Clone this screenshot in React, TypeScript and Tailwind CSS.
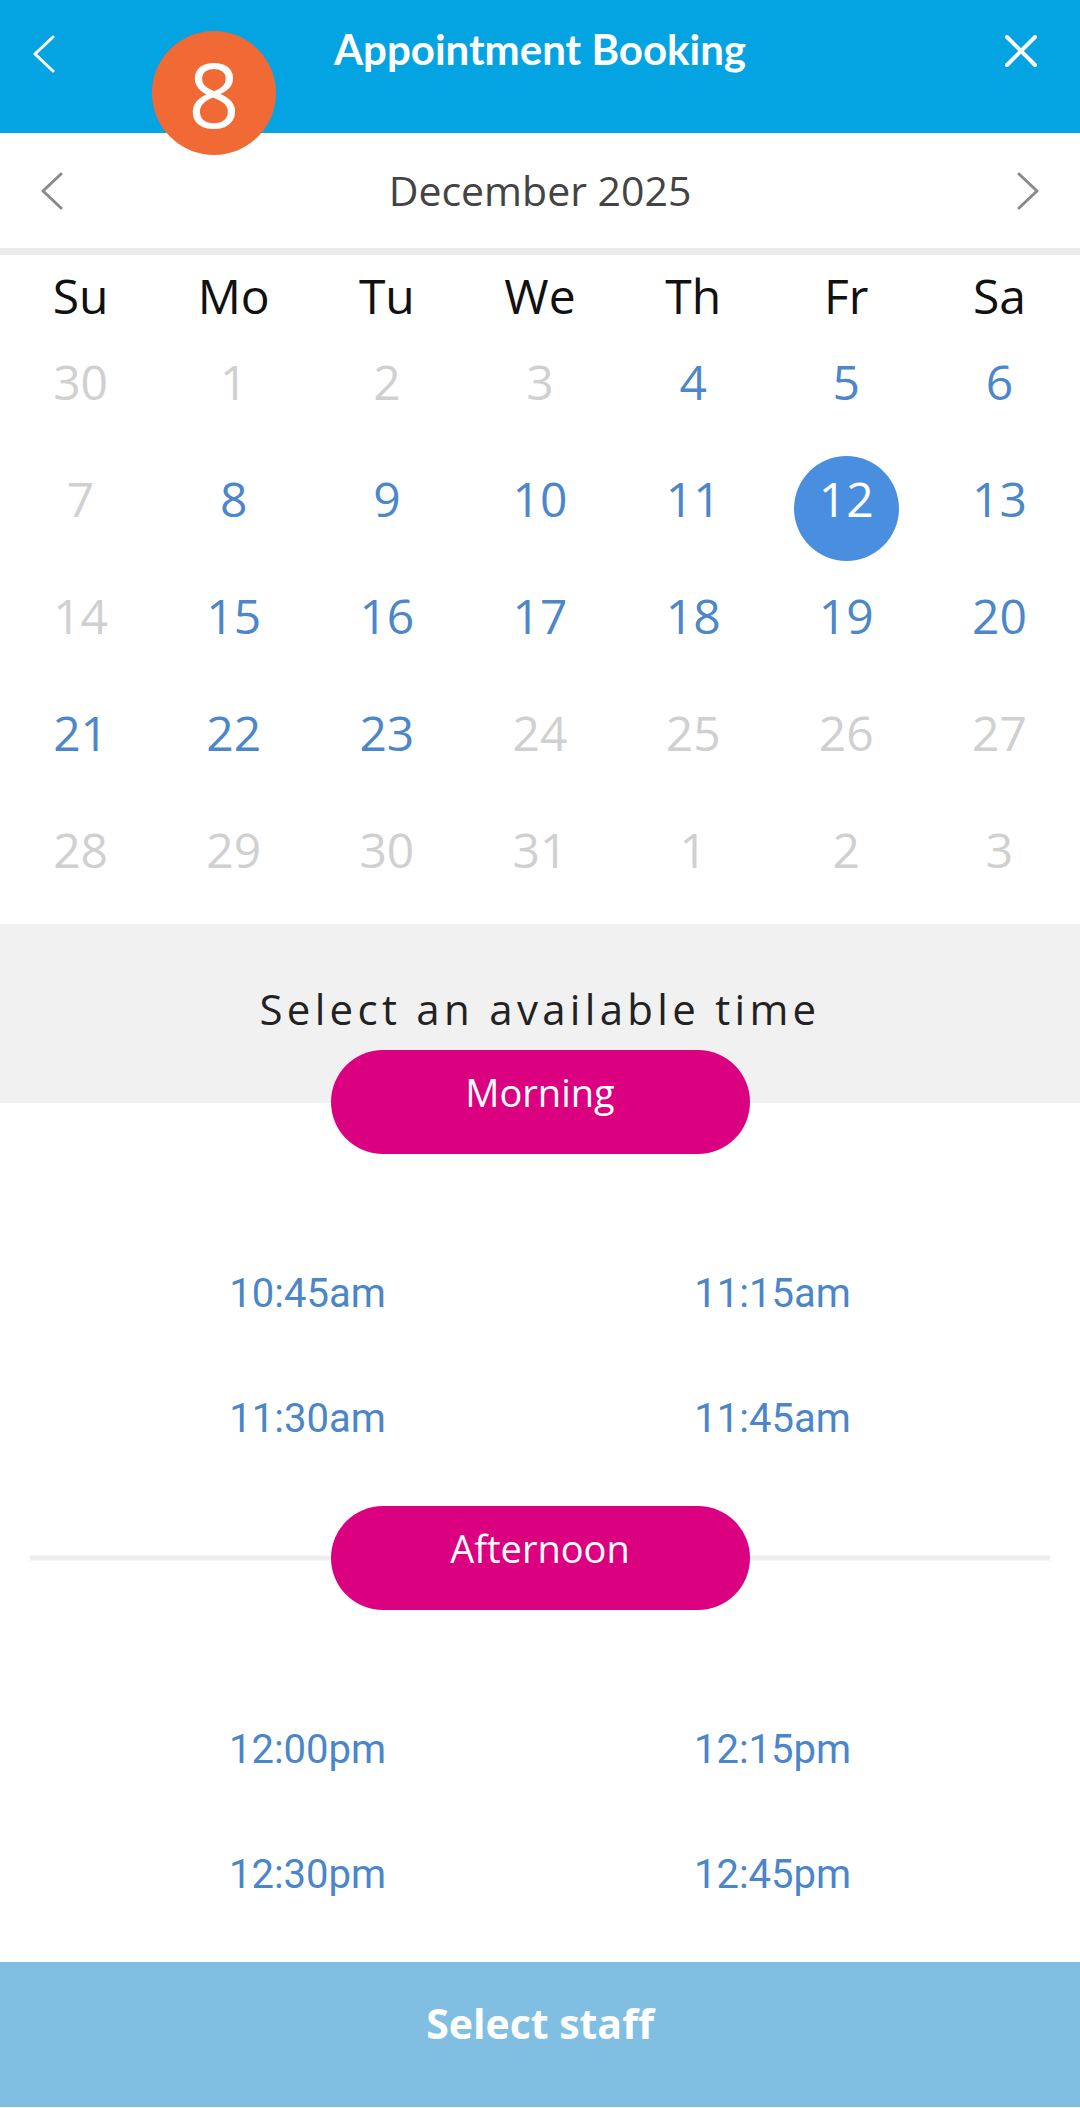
import React from "react";

type Day = { n: number; on?: boolean; sel?: boolean };

const weekdays = ["Su", "Mo", "Tu", "We", "Th", "Fr", "Sa"];

const weeks: Day[][] = [
  [{ n: 30 }, { n: 1 }, { n: 2 }, { n: 3 }, { n: 4, on: true }, { n: 5, on: true }, { n: 6, on: true }],
  [{ n: 7 }, { n: 8, on: true }, { n: 9, on: true }, { n: 10, on: true }, { n: 11, on: true }, { n: 12, sel: true }, { n: 13, on: true }],
  [{ n: 14 }, { n: 15, on: true }, { n: 16, on: true }, { n: 17, on: true }, { n: 18, on: true }, { n: 19, on: true }, { n: 20, on: true }],
  [{ n: 21, on: true }, { n: 22, on: true }, { n: 23, on: true }, { n: 24 }, { n: 25 }, { n: 26 }, { n: 27 }],
  [{ n: 28 }, { n: 29 }, { n: 30 }, { n: 31 }, { n: 1 }, { n: 2 }, { n: 3 }],
];

function Pill({ label }: { label: string }) {
  return (
    <div className="relative z-10 flex h-[104px] w-[419px] items-center justify-center rounded-full bg-[#db0080] pb-[20px] text-[38px] leading-none text-white">
      {label}
    </div>
  );
}

function Times({ items }: { items: string[] }) {
  return (
    <div className="mt-[77px] mb-[25px] grid grid-cols-2 px-[75px] font-['Roboto',sans-serif]">
      {items.map((t) => (
        <div key={t} className="flex h-[125px] items-center justify-center text-[40px] leading-none text-[#4a86c8]">
          {t}
        </div>
      ))}
    </div>
  );
}

export default function App() {
  return (
    <div className="flex min-h-[2108px] w-[1080px] flex-col bg-white font-['Open_Sans',sans-serif]">
      {/* Header */}
      <div className="relative grid h-[133px] grid-cols-[1fr_auto_1fr] items-start bg-[#04a4e2] text-white">
        <div className="pt-[35px] pl-[33px]">
          <svg width="24" height="38" viewBox="0 0 24 38" fill="none">
            <polyline points="20,2 2,19 20,36" stroke="white" strokeWidth="3" strokeLinecap="round" strokeLinejoin="round" />
          </svg>
        </div>
        <div className="pt-[28px] font-['Lato',sans-serif] text-[42px] font-bold leading-none">
          Appointment Booking
        </div>
        <div className="flex justify-end pt-[34px] pr-[42px]">
          <svg width="34" height="34" viewBox="0 0 34 34" fill="none">
            <path d="M3 3 L31 31 M31 3 L3 31" stroke="white" strokeWidth="4" strokeLinecap="round" />
          </svg>
        </div>
        {/* step badge */}
        <div className="absolute left-[152px] top-[31px] flex h-[124px] w-[124px] items-center justify-center rounded-full bg-[#f16a35] text-[90px] leading-none text-white">
          8
        </div>
      </div>

      {/* Month switcher */}
      <div className="flex h-[115px] items-center justify-between px-[40px]">
        <svg width="24" height="38" viewBox="0 0 24 38" fill="none">
          <polyline points="21,2 3,19 21,36" stroke="#8a8a8a" strokeWidth="3" strokeLinecap="round" strokeLinejoin="round" />
        </svg>
        <span className="text-[41px] leading-none text-[#444]">December 2025</span>
        <svg width="24" height="38" viewBox="0 0 24 38" fill="none">
          <polyline points="3,2 21,19 3,36" stroke="#8a8a8a" strokeWidth="3" strokeLinecap="round" strokeLinejoin="round" />
        </svg>
      </div>
      <div className="h-[7px] bg-[#ebebeb]" />

      {/* Calendar */}
      <div className="px-[4px] pb-[16px]">
        <div className="grid h-[68px] grid-cols-7 pt-[13px]">
          {weekdays.map((w) => (
            <div key={w} className="flex items-center justify-center text-[48px] leading-none text-[#111]">
              {w}
            </div>
          ))}
        </div>
        {weeks.map((row, i) => (
          <div key={i} className="grid h-[117px] grid-cols-7">
            {row.map((d, j) => (
              <div key={j} className="flex items-center justify-center text-[48px] leading-none">
                {d.sel ? (
                  <div className="flex h-[105px] w-[105px] translate-y-[10px] items-center justify-center rounded-full bg-[#4a8ee0] pb-[20px] text-white">
                    {d.n}
                  </div>
                ) : (
                  <span className={d.on ? "text-[#4b87c9]" : "text-[#d0d0d0]"}>{d.n}</span>
                )}
              </div>
            ))}
          </div>
        ))}
      </div>

      {/* Time selection */}
      <div className="flex h-[179px] flex-col items-center bg-[#f1f1f1]">
        <div className="mt-[64px] text-[42px] leading-none tracking-[4.3px] text-[#222]">
          Select an available time
        </div>
      </div>
      <div className="-mt-[53px] flex flex-col items-center">
        <Pill label="Morning" />
      </div>
      <Times items={["10:45am", "11:15am", "11:30am", "11:45am"]} />

      <div className="relative flex items-center justify-center">
        <div className="absolute left-[30px] right-[30px] top-1/2 h-[5px] -translate-y-1/2 bg-[#eeeeee]" />
        <Pill label="Afternoon" />
      </div>
      <Times items={["12:00pm", "12:15pm", "12:30pm", "12:45pm"]} />

      {/* Footer action */}
      <div className="flex h-[145px] items-center justify-center bg-[#80bfe2] pb-[22px] text-[41px] font-bold leading-none text-white">
        Select staff
      </div>
    </div>
  );
}
